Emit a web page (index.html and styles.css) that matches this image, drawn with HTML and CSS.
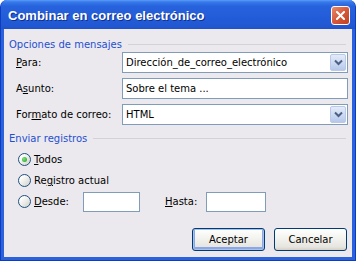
FILE: index.html
```html
<!DOCTYPE html>
<html lang="es">
<head>
    <meta charset="UTF-8">
    <title>Combinar en correo electrónico</title>
    <link rel="stylesheet" href="styles.css">
</head>
<body>
    <div class="window">
        <!-- Title bar -->
        <div class="titlebar">
            <span class="title">Combinar en correo electrónico</span>
            <span class="close">
                <svg width="9" height="9" viewBox="0 0 9 9">
                    <path d="M1 1 L8 8 M8 1 L1 8" stroke="#fff" stroke-width="2" stroke-linecap="square"/>
                </svg>
            </span>
        </div>

        <div class="dialog">
            <!-- Message options -->
            <div class="group-title"><span>Opciones de mensajes</span><i class="rule"></i></div>

            <div class="field">
                <label><u>P</u>ara:</label>
                <div class="combo">
                    <span class="value">Dirección_de_correo_electrónico</span>
                    <span class="drop">
                        <svg width="9" height="7" viewBox="0 0 9 7"><path d="M1 1.5 L4.5 5 L8 1.5" fill="none" stroke="#4d6185" stroke-width="2"/></svg>
                    </span>
                </div>
            </div>

            <div class="field">
                <label>A<u>s</u>unto:</label>
                <div class="textbox">Sobre el tema ...</div>
            </div>

            <div class="field">
                <label>For<u>m</u>ato de correo:</label>
                <div class="combo">
                    <span class="value">HTML</span>
                    <span class="drop">
                        <svg width="9" height="7" viewBox="0 0 9 7"><path d="M1 1.5 L4.5 5 L8 1.5" fill="none" stroke="#4d6185" stroke-width="2"/></svg>
                    </span>
                </div>
            </div>

            <!-- Records -->
            <div class="group-title second"><span>Enviar registros</span><i class="rule"></i></div>

            <div class="radios">
                <div class="radio-row">
                    <span class="radio checked"></span>
                    <span><u>T</u>odos</span>
                </div>
                <div class="radio-row">
                    <span class="radio"></span>
                    <span>Re<u>g</u>istro actual</span>
                </div>
                <div class="radio-row">
                    <span class="radio"></span>
                    <span class="range-label"><u>D</u>esde:</span>
                    <div class="textbox small"></div>
                    <span class="range-label to"><u>H</u>asta:</span>
                    <div class="textbox small wide"></div>
                </div>
            </div>

            <div class="buttons">
                <button class="btn default">Aceptar</button>
                <button class="btn">Cancelar</button>
            </div>
        </div>
    </div>
</body>
</html>
```

FILE: styles.css
```css
body {
    margin: 0;
    background: #fff;
    font-family: "DejaVu Sans", Verdana, sans-serif;
    font-size: 10px;
    color: #000;
}
.window {
    width: 356px;
    height: 261px;
    box-sizing: border-box;
    display: flex;
    flex-direction: column;
    background: #2b62dc;
    border: 1px solid #0b3cc2;
    border-top: none;
    border-radius: 7px 7px 0 0;
    overflow: hidden;
}
.titlebar {
    height: 29px;
    flex: none;
    display: flex;
    align-items: center;
    padding: 0 5px 0 7px;
    background: linear-gradient(to bottom, #5a9bf6 0, #3779ec 2px, #2763dc 6px, #235cd8 18px, #2158d2 26px, #1f52c8 29px);
}
.title {
    flex: 1;
    color: #fff;
    font-family: "Liberation Sans", Arial, sans-serif;
    font-weight: bold;
    font-size: 13px;
    text-shadow: 1px 1px 0 #0f2f8c;
    padding-top: 1px;
}
.close {
    width: 19px;
    height: 19px;
    box-sizing: border-box;
    display: flex;
    align-items: center;
    justify-content: center;
    border: 1px solid #fff;
    border-radius: 3px;
    background: linear-gradient(to bottom right, #e88a6c, #d5583a 50%, #c2411f);
    margin-top: 1px;
}
.dialog {
    flex: 1;
    margin: 0 3px 3px 3px;
    background: #ebe9ed;
    padding: 8px 4px 0 5px;
}
.group-title {
    height: 14px;
    display: flex;
    align-items: center;
    color: #1f4fd2;
}
.group-title.second {
    margin-top: 6px;
}
.rule {
    flex: 1;
    height: 1px;
    margin: 0 2px 0 6px;
    background: #d4d2d8;
}
.field {
    display: flex;
    align-items: center;
    height: 21px;
    margin-top: 5px;
}
.group-title + .field {
    margin-top: 1px;
}
.field label {
    box-sizing: border-box;
    padding-left: 7px;
    width: 113px;
}
.combo,
.textbox {
    width: 226px;
    height: 21px;
    box-sizing: border-box;
    border: 1px solid #7f9db9;
    background: #fff;
    display: flex;
    align-items: center;
    padding-left: 3px;
}
.combo .value {
    flex: 1;
}
.drop {
    width: 16px;
    height: 17px;
    margin-right: 1px;
    box-sizing: border-box;
    border: 1px solid #b9c9e8;
    border-radius: 2px;
    background: linear-gradient(to bottom, #e4ebf8, #c9d7f1 60%, #b5c7ea);
    display: flex;
    align-items: center;
    justify-content: center;
}
.radios {
    margin-top: 4px;
    padding-left: 9px;
}
.radio-row {
    height: 21px;
    display: flex;
    align-items: center;
}
.radio {
    width: 13px;
    height: 13px;
    box-sizing: border-box;
    border: 1px solid #1c5180;
    border-radius: 50%;
    background: linear-gradient(to bottom right, #fff 20%, #e8e8e4 60%, #d0d0cb);
    margin-right: 3px;
    display: flex;
    align-items: center;
    justify-content: center;
}
.radio.checked::after {
    content: "";
    width: 5px;
    height: 5px;
    border-radius: 50%;
    background: radial-gradient(circle at 35% 35%, #7fe07c, #21a121);
}
.range-label {
    width: 49px;
}
.range-label.to {
    width: 41px;
    margin-left: 25px;
}
.textbox.small {
    width: 57px;
    height: 20px;
}
.textbox.small.wide {
    width: 60px;
}
.buttons {
    display: flex;
    justify-content: flex-end;
    gap: 9px;
    margin-top: 16px;
    padding-right: 1px;
}
.btn {
    width: 73px;
    height: 23px;
    font-family: inherit;
    font-size: inherit;
    color: #000;
    border: 1px solid #003c74;
    border-radius: 3px;
    background: linear-gradient(to bottom, #fff, #f4f4f0 40%, #e6e5e0 85%, #d6d0c5);
    padding: 0;
}
.btn.default {
    box-shadow: inset 0 0 0 1px #a9c0ec, inset 0 -1px 0 2px #8ca8e4;
}
```
